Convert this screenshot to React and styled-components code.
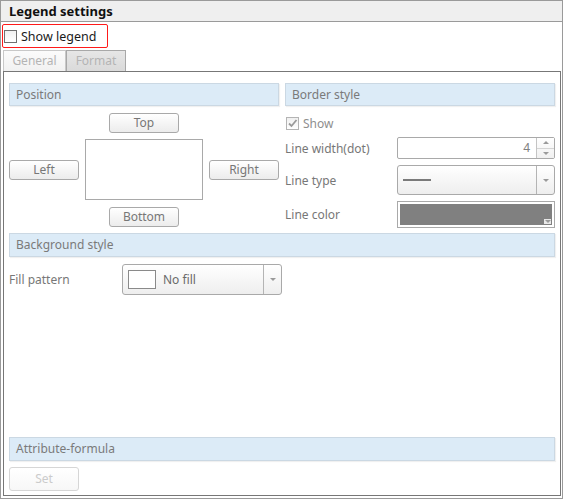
import React from 'react';
import styled, { createGlobalStyle } from 'styled-components';

const GlobalStyle = createGlobalStyle`
    html, body {
        margin: 0;
        padding: 0;
        background: #ffffff;
    }
    * {
        box-sizing: border-box;
    }
    body {
        font-family: "Noto Sans", "Liberation Sans", Arial, sans-serif;
    }
`

const Frame = styled.div`
    width: 563px;
    height: 499px;
    border: 1px solid #9a9a9a;
    display: flex;
    flex-direction: column;
    background: #ffffff;
`

const TitleBar = styled.div`
    height: 21px;
    background: #efefef;
    border-bottom: 1px solid #9a9a9a;
    padding-left: 8px;
    font-size: 13px;
    font-weight: 700;
    line-height: 20px;
    color: #111;
`

const ShowLegendBox = styled.label`
    margin: 2px 0 0 1px;
    width: 106px;
    height: 24px;
    border: 1px solid #ff1a1a;
    border-radius: 2px;
    display: flex;
    align-items: center;
    gap: 4px;
    padding-left: 1px;
    font-size: 12.5px;
    color: #1a1a1a;
`

const CheckBox = styled.span`
    position: relative;
    width: 13px;
    height: 13px;
    flex: none;
    border: 1px solid ${p => (p.$disabled ? '#b4b4b4' : '#707070')};
    background: linear-gradient(#f0f0f0, #ffffff);
`

const CheckMark = styled.svg`
    position: absolute;
    left: 0;
    top: 0;
`

const TabStrip = styled.div`
    margin: 2px 0 0 2px;
    display: flex;
    height: 21px;
`

const Tab = styled.div`
    width: ${p => p.$width}px;
    height: 21px;
    border: 1px solid ${p => (p.$active ? '#c8c8c8' : '#a8a8a8')};
    border-bottom: none;
    background: ${p => (p.$active
        ? 'linear-gradient(#fbfbfb, #f1f1f1)'
        : 'linear-gradient(#e6e6e6, #dadada)')};
    color: #b4b4b4;
    font-size: 12px;
    line-height: 20px;
    text-align: center;
`

const Panel = styled.div`
    margin-left: 2px;
    width: 558px;
    height: 425px;
    border: 1px solid #777;
    padding: 11px 5px 4px 5px;
    display: flex;
    flex-direction: column;
`

const TopSection = styled.div`
    display: grid;
    grid-template-columns: 270px 270px;
    column-gap: 6px;
`

const Column = styled.div`
    display: flex;
    flex-direction: column;
`

const SectionHeader = styled.div`
    height: ${p => p.$height || 23}px;
    background: #dcebf7;
    border: 1px solid #cbd8e3;
    box-shadow: 1px 1px 1px rgba(0, 0, 0, 0.06);
    padding-left: 6px;
    font-size: 12px;
    line-height: ${p => (p.$height || 23) - 2}px;
    color: #7a7a7a;
`

const PositionGrid = styled.div`
    margin-top: 7px;
    display: grid;
    grid-template-columns: 70px 118px 70px;
    grid-template-rows: 20px 61px 20px;
    column-gap: 6px;
    row-gap: 6px;
    align-items: center;
    justify-items: center;

    & > :last-child {
        margin-top: 1px;
    }
`

const Button = styled.button`
    width: 70px;
    height: ${p => p.$height || 20}px;
    grid-column: ${p => p.$col || 'auto'};
    grid-row: ${p => p.$row || 'auto'};
    padding: 0;
    border: 1px solid ${p => (p.$disabled ? '#d6d6d6' : '#a9a9a9')};
    border-radius: 3px;
    background: ${p => (p.$disabled
        ? 'linear-gradient(#ffffff, #f7f7f7)'
        : 'linear-gradient(#ffffff, #ececec)')};
    color: ${p => (p.$disabled ? '#cbcbcb' : '#777')};
    font-family: inherit;
    font-size: 12px;
    line-height: 1;
`

const PreviewBox = styled.div`
    grid-column: 2;
    grid-row: 2;
    width: 118px;
    height: 61px;
    border: 1px solid #a9a9a9;
    background: #ffffff;
`

const ShowRow = styled.div`
    margin-top: 7px;
    height: 20px;
    display: flex;
    align-items: center;
    gap: 4px;
    padding-left: 1px;
    font-size: 12px;
    color: #8e8e8e;
`

const FieldRow = styled.div`
    display: flex;
    align-items: center;
    margin-top: ${p => p.$gap || 6}px;
`

const Label = styled.div`
    width: ${p => p.$width || 112}px;
    flex: none;
    font-size: 12px;
    color: #777;
`

const SpinBox = styled.div`
    width: 158px;
    height: 22px;
    display: flex;
    border: 1px solid #a9a9a9;
    border-radius: 2px;
    background: #ffffff;
`

const SpinValue = styled.div`
    flex: 1;
    text-align: right;
    padding-right: 6px;
    font-size: 12px;
    line-height: 20px;
    color: #808080;
`

const SpinButtons = styled.div`
    width: 18px;
    display: flex;
    flex-direction: column;
    border-left: 1px solid #c4c4c4;
    background: linear-gradient(#ffffff, #f0f0f0);
`

const SpinHalf = styled.div`
    flex: 1;
    display: flex;
    align-items: center;
    justify-content: center;
    border-top: ${p => (p.$lower ? '1px solid #d4d4d4' : 'none')};
`

const Arrow = styled.span`
    width: 0;
    height: 0;
    border-left: 3px solid transparent;
    border-right: 3px solid transparent;
    ${p => (p.$up
        ? 'border-bottom: 3px solid #9a9a9a;'
        : 'border-top: 3px solid #9a9a9a;')}
`

const Dropdown = styled.div`
    width: ${p => p.$width}px;
    height: ${p => p.$height}px;
    display: flex;
    border: 1px solid #a9a9a9;
    border-radius: 3px;
    background: linear-gradient(#ffffff, #eeeeee);
`

const DropdownBody = styled.div`
    flex: 1;
    display: flex;
    align-items: center;
    padding-left: ${p => p.$pad || 5}px;
    gap: 7px;
    font-size: 12px;
    color: #6a6a6a;
`

const DropdownToggle = styled.div`
    width: 18px;
    display: flex;
    align-items: center;
    justify-content: center;
    border-left: 1px solid #b4b4b4;
`

const LineSample = styled.span`
    width: 28px;
    height: 2px;
    background: #7a7a7a;
`

const Swatch = styled.span`
    width: 28px;
    height: 19px;
    border: 1px solid #8a8a8a;
    background: #ffffff;
`

const ColorPicker = styled.div`
    position: relative;
    width: 158px;
    height: 27px;
    border: 1px solid #a9a9a9;
    padding: 2px;
    background: #ffffff;
`

const ColorFill = styled.div`
    width: 100%;
    height: 100%;
    background: #808080;
`

const CornerArrow = styled.span`
    position: absolute;
    right: 3px;
    bottom: 3px;
    width: 7px;
    height: 5px;
    background: #e8e8e8;
    display: flex;
    align-items: center;
    justify-content: center;
`

const BackgroundHeader = styled(SectionHeader)`
    margin-top: 5px;
`

const FillRow = styled.div`
    margin-top: 7px;
    display: flex;
    align-items: center;
`

const Spacer = styled.div`
    flex: 1;
`

const ButtonRow = styled.div`
    margin-top: 6px;
    display: flex;
`

const Check = ({ checked, disabled }) => (
    <CheckBox $disabled={disabled}>
        {checked && (
            <CheckMark width="11" height="11" viewBox="0 0 11 11">
                <path d="M2 5.5 L4.5 8 L9.5 2" fill="none" stroke="#9a9a9a" strokeWidth="1.8" />
            </CheckMark>
        )}
    </CheckBox>
)

const App = () => {
    return (
        <>
            <GlobalStyle />
            <Frame>
                <TitleBar>Legend settings</TitleBar>
                <ShowLegendBox>
                    <Check />
                    Show legend
                </ShowLegendBox>
                <TabStrip>
                    <Tab $width={63} $active>General</Tab>
                    <Tab $width={60}>Format</Tab>
                </TabStrip>
                <Panel>
                    <TopSection>
                        <Column>
                            <SectionHeader>Position</SectionHeader>
                            <PositionGrid>
                                <Button $col={2} $row={1}>Top</Button>
                                <Button $col={1} $row={2}>Left</Button>
                                <PreviewBox />
                                <Button $col={3} $row={2}>Right</Button>
                                <Button $col={2} $row={3}>Bottom</Button>
                            </PositionGrid>
                        </Column>
                        <Column>
                            <SectionHeader>Border style</SectionHeader>
                            <ShowRow>
                                <Check checked disabled />
                                Show
                            </ShowRow>
                            <FieldRow $gap={4}>
                                <Label>Line width(dot)</Label>
                                <SpinBox>
                                    <SpinValue>4</SpinValue>
                                    <SpinButtons>
                                        <SpinHalf><Arrow $up /></SpinHalf>
                                        <SpinHalf $lower><Arrow /></SpinHalf>
                                    </SpinButtons>
                                </SpinBox>
                            </FieldRow>
                            <FieldRow>
                                <Label>Line type</Label>
                                <Dropdown $width={158} $height={30}>
                                    <DropdownBody>
                                        <LineSample />
                                    </DropdownBody>
                                    <DropdownToggle><Arrow /></DropdownToggle>
                                </Dropdown>
                            </FieldRow>
                            <FieldRow>
                                <Label>Line color</Label>
                                <ColorPicker>
                                    <ColorFill />
                                    <CornerArrow><Arrow /></CornerArrow>
                                </ColorPicker>
                            </FieldRow>
                        </Column>
                    </TopSection>
                    <BackgroundHeader $height={24}>Background style</BackgroundHeader>
                    <FillRow>
                        <Label $width={113}>Fill pattern</Label>
                        <Dropdown $width={160} $height={31}>
                            <DropdownBody $pad={5}>
                                <Swatch />
                                No fill
                            </DropdownBody>
                            <DropdownToggle><Arrow /></DropdownToggle>
                        </Dropdown>
                    </FillRow>
                    <Spacer />
                    <SectionHeader $height={24}>Attribute-formula</SectionHeader>
                    <ButtonRow>
                        <Button $height={24} $disabled>Set</Button>
                    </ButtonRow>
                </Panel>
            </Frame>
        </>
    )
}

export default App;
